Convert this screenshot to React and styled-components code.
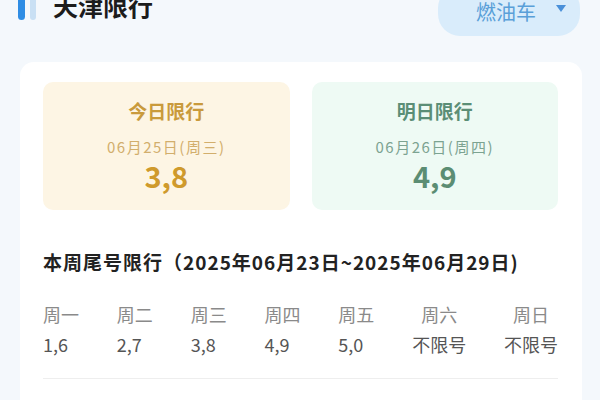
import React from "react";
import styled, { createGlobalStyle } from "styled-components";

const GlobalStyle = createGlobalStyle`
  html, body { margin: 0; padding: 0; }
  body {
    background: #f4f8fc;
    font-family: "Noto Sans CJK SC", "Noto Sans", sans-serif;
    overflow: hidden;
  }
`;

const Page = styled.div`
  width: 600px;
  height: 400px;
  box-sizing: border-box;
  padding: 0 18px;
  overflow: hidden;
`;

const Header = styled.header`
  display: flex;
  align-items: flex-start;
  height: 50px;
  margin-top: -14px;
`;

const BarMark = styled.div`
  display: flex;
  gap: 5px;
  height: 34px;
`;

const Bar = styled.span`
  width: ${(p) => p.$w}px;
  height: 100%;
  border-radius: 0 0 4px 4px;
  background: ${(p) => p.$color};
`;

const Title = styled.h1`
  margin: 7px 0 0 17px;
  font-size: 25px;
  line-height: 25px;
  font-weight: 700;
  color: #1c1c1c;
`;

const Pill = styled.button`
  margin-left: auto;
  margin-right: 2px;
  height: 50px;
  width: 142px;
  box-sizing: border-box;
  border: none;
  border-radius: 22px;
  background: #d9ecfb;
  display: flex;
  align-items: center;
  padding: 0 14px 0 38px;
  font-family: inherit;
  font-size: 20px;
  color: #5a9fd8;
  gap: 20px;
`;

const Caret = styled.svg`
  width: 10px;
  height: 7px;
  margin-top: -6px;
`;

const Card = styled.section`
  margin: 26px 0 0 2px;
  background: #ffffff;
  border-radius: 14px;
  padding: 20px 24px 0 23px;
  height: 400px;
`;

const Tiles = styled.div`
  display: grid;
  grid-template-columns: 1fr 1fr;
  gap: 22px;
`;

const Tile = styled.div`
  height: 128px;
  box-sizing: border-box;
  border-radius: 10px;
  background: ${(p) => p.$bg};
  display: flex;
  flex-direction: column;
  align-items: center;
  padding-top: 16px;
`;

const TileTitle = styled.div`
  font-size: 19px;
  line-height: 26px;
  font-weight: 700;
  color: ${(p) => p.$color};
`;

const TileDate = styled.div`
  margin-top: 12px;
  font-size: 15px;
  line-height: 22px;
  letter-spacing: 1.5px;
  color: ${(p) => p.$color};
`;

const TileNum = styled.div`
  margin-top: -1px;
  font-size: 29px;
  line-height: 36px;
  font-weight: 700;
  color: ${(p) => p.$color};
`;

const WeekHeading = styled.h2`
  margin: 38px 0 0 0;
  font-size: 19px;
  line-height: 28px;
  font-weight: 700;
  letter-spacing: 1px;
  white-space: nowrap;
  color: #222;
`;

const Week = styled.div`
  display: flex;
  justify-content: space-between;
  margin-top: 25px;
`;

const Day = styled.div`
  display: flex;
  flex-direction: column;
  align-items: ${(p) => (p.$center ? "center" : "flex-start")};
  gap: 4px;
`;

const DayLabel = styled.span`
  font-size: 18px;
  line-height: 26px;
  color: #8a8a8a;
`;

const DayValue = styled.span`
  font-size: 18px;
  line-height: 26px;
  color: #555;
`;

const Divider = styled.hr`
  margin: 21px 0 0 0;
  border: none;
  border-top: 1px solid #eeeeee;
`;

const days = [
  ["周一", "1,6"],
  ["周二", "2,7"],
  ["周三", "3,8"],
  ["周四", "4,9"],
  ["周五", "5,0"],
  ["周六", "不限号", true],
  ["周日", "不限号", true],
];

export default function App() {
  return (
    <>
      <GlobalStyle />
      <Page>
        <Header>
          <BarMark>
            <Bar $w={7} $color="#2f8de4" />
            <Bar $w={6} $color="#c9e0f4" />
          </BarMark>
          <Title>天津限行</Title>
          <Pill>
            燃油车
            <Caret viewBox="0 0 10 7">
              <path d="M0 0 H10 L5 7 Z" fill="#4a90d9" />
            </Caret>
          </Pill>
        </Header>
        <Card>
          <Tiles>
            <Tile $bg="#fdf5e4">
              <TileTitle $color="#c99a3c">今日限行</TileTitle>
              <TileDate $color="#d2ae6c">06月25日(周三)</TileDate>
              <TileNum $color="#cf9a2c">3,8</TileNum>
            </Tile>
            <Tile $bg="#eefaf4">
              <TileTitle $color="#5b8e76">明日限行</TileTitle>
              <TileDate $color="#7ca391">06月26日(周四)</TileDate>
              <TileNum $color="#5b8d73">4,9</TileNum>
            </Tile>
          </Tiles>
          <WeekHeading>本周尾号限行（2025年06月23日~2025年06月29日)</WeekHeading>
          <Week>
            {days.map(([d, v, c]) => (
              <Day key={d} $center={c}>
                <DayLabel>{d}</DayLabel>
                <DayValue>{v}</DayValue>
              </Day>
            ))}
          </Week>
          <Divider />
        </Card>
      </Page>
    </>
  );
}
